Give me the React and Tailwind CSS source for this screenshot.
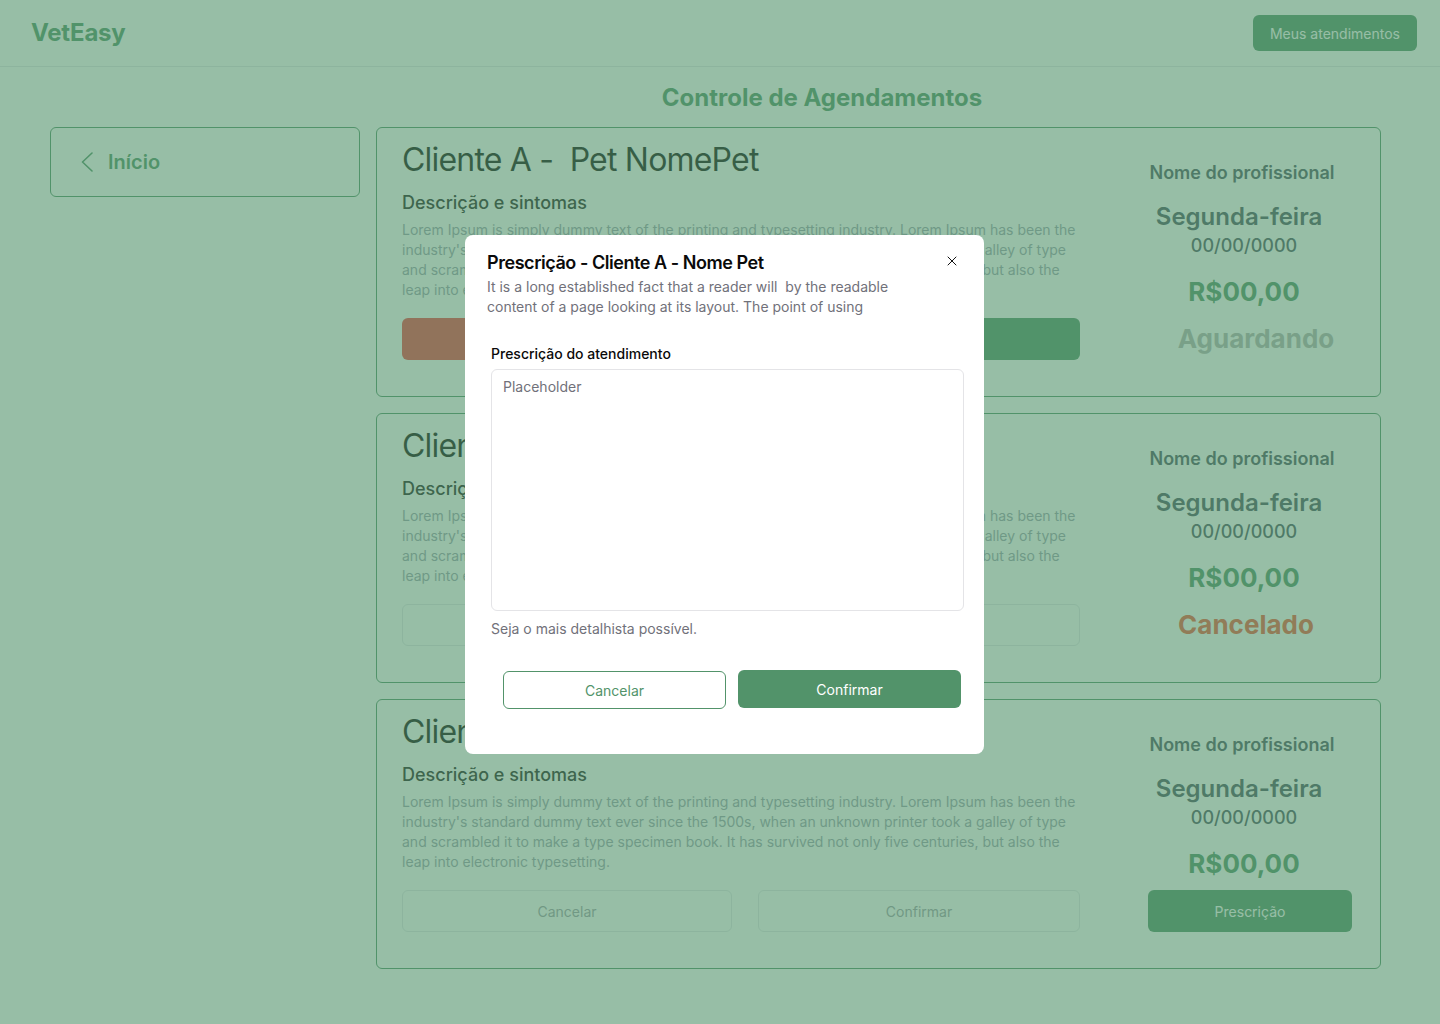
import React from "react";
import { X } from "lucide-react";

const LOREM =
  "Lorem Ipsum is simply dummy text of the printing and typesetting industry. Lorem Ipsum has been the industry's standard dummy text ever since the 1500s, when an unknown printer took a galley of type and scrambled it to make a type specimen book. It has survived not only five centuries, but also the leap into electronic typesetting.";

function Card({ status, variant }) {
  return (
    <div className="flex h-[270px] rounded-md border border-[#52936a] bg-white">
      <div className="w-[704px] shrink-0 pl-[25px] pt-[12px]">
        <h2 className="whitespace-pre text-[32px] leading-[40px] tracking-tight text-[#111]">
          {"Cliente A -  Pet NomePet"}
        </h2>
        <h3 className="mt-[9px] text-[18px] font-medium leading-[28px] text-[#222]">
          Descrição e sintomas
        </h3>
        <p className="mt-[3px] w-[680px] text-[14px] leading-[20px] text-[#9ca3af]">
          {LOREM}
        </p>
        <div className="mt-[18px] flex w-[678px] gap-[26px]">
          {variant === "active" ? (
            <>
              <button className="h-[42px] w-[330px] rounded-md bg-[#ef4444] text-[14px] text-white">
                Cancelar
              </button>
              <button className="h-[42px] flex-1 rounded-md bg-[#52936a] text-[14px] text-white">
                Confirmar
              </button>
            </>
          ) : (
            <>
              <button className="h-[42px] w-[330px] rounded-md border border-[#e5e7eb] text-[14px] text-[#a1a1aa]">
                Cancelar
              </button>
              <button className="h-[42px] flex-1 rounded-md border border-[#e5e7eb] text-[14px] text-[#a1a1aa]">
                Confirmar
              </button>
            </>
          )}
        </div>
      </div>
      <div className="ml-auto flex w-[272px] flex-col items-center pt-[32px]">
        <div className="pr-[4px] text-[18px] font-semibold leading-[26px] text-[#4b5563]">
          Nome do profissional
        </div>
        <div className="mt-[16px] pr-[10px] text-[24px] font-semibold leading-[30px] text-[#4b5563]">
          Segunda-feira
        </div>
        <div className="text-[18px] font-medium leading-[28px] text-[#4b5563]">
          00/00/0000
        </div>
        <div className="mt-[14px] text-[26px] font-bold leading-[36px] text-[#52936a]">
          R$00,00
        </div>
        {status === "Aguardando" && (
          <div className="mt-[11px] pl-[24px] text-[26px] font-bold leading-[36px] text-[#b4b4b4]">
            Aguardando
          </div>
        )}
        {status === "Cancelado" && (
          <div className="mt-[11px] pl-[4px] text-[26px] font-bold leading-[36px] text-[#f05a3c]">
            Cancelado
          </div>
        )}
        {status === "Prescricao" && (
          <button className="mt-[8px] ml-[12px] h-[42px] w-[204px] rounded-md bg-[#52936a] text-[14px] text-white">
            Prescrição
          </button>
        )}
      </div>
    </div>
  );
}

export default function App() {
  return (
    <div
      className="min-h-[1024px] bg-white"
      style={{ fontFamily: "Inter, 'Noto Sans', sans-serif" }}
    >
      <header className="flex h-[67px] items-center justify-between border-b border-[#e5e7eb] pl-[31px] pr-[23px]">
        <div className="text-[24px] font-bold tracking-[-0.2px] text-[#52936a]">VetEasy</div>
        <button className="h-[36px] rounded-md bg-[#52936a] px-[17px] text-[14px] text-white">
          Meus atendimentos
        </button>
      </header>

      <div className="flex justify-center pl-[204px] pt-[15px]">
        <h1 className="text-[24px] font-bold leading-[32px] text-[#52936a]">
          Controle de Agendamentos
        </h1>
      </div>

      <div className="mt-[13px] flex gap-[16px] pl-[50px] pr-[59px]">
        <div className="h-[70px] w-[310px] shrink-0">
          <div className="flex h-[70px] items-center gap-[14px] rounded-md border border-[#52936a] pl-[29px]">
            <svg width="14" height="20" viewBox="0 0 14 20" fill="none">
              <path
                d="M12 1 L2.5 10 L12 19"
                stroke="#52936a"
                strokeWidth="1.6"
                strokeLinecap="round"
                strokeLinejoin="round"
              />
            </svg>
            <span className="text-[20px] font-semibold text-[#52936a]">Início</span>
          </div>
        </div>
        <div className="flex flex-1 flex-col gap-[16px]">
          <Card status="Aguardando" variant="active" />
          <Card status="Cancelado" variant="disabled" />
          <Card status="Prescricao" variant="disabled" />
        </div>
      </div>

      <div className="fixed inset-0 flex items-start justify-center bg-[#52936a]/60 pt-[235px]">
        <div className="relative ml-[9px] h-[519px] w-[519px] rounded-lg bg-white pl-[22px] pr-[20px] pt-[14px]">
          <button className="absolute right-[24px] top-[18px] text-[#111]">
            <X size={16} strokeWidth={1.5} />
          </button>
          <h2 className="text-[18px] font-semibold leading-[28px] tracking-tight text-[#0a0a0a]">
            Prescrição - Cliente A - Nome Pet
          </h2>
          <p className="w-[420px] text-[14px] leading-[20px] text-[#71717a]">
            It is a long established fact that a reader will&nbsp; by the readable content of a page looking at its layout. The point of using
          </p>
          <div className="mt-[27px] pl-[4px]">
            <label className="block text-[14px] font-medium leading-[20px] text-[#0a0a0a]">
              Prescrição do atendimento
            </label>
            <textarea
              className="mt-[5px] block h-[242px] w-[473px] resize-none rounded-md border border-[#e4e4e7] px-[11px] py-[7px] text-[14px] leading-[20px] text-[#111] outline-none placeholder:text-[#71717a]"
              placeholder="Placeholder"
            />
            <p className="mt-[8px] text-[14px] leading-[20px] text-[#71717a]">
              Seja o mais detalhista possível.
            </p>
            <div className="mt-[31px] flex gap-[12px] pl-[12px]">
              <button className="mt-[1px] h-[38px] w-[223px] rounded-md border border-[#52936a] text-[14px] text-[#52936a]">
                Cancelar
              </button>
              <button className="h-[38px] w-[223px] rounded-md bg-[#52936a] text-[14px] text-white">
                Confirmar
              </button>
            </div>
          </div>
        </div>
      </div>
    </div>
  );
}
